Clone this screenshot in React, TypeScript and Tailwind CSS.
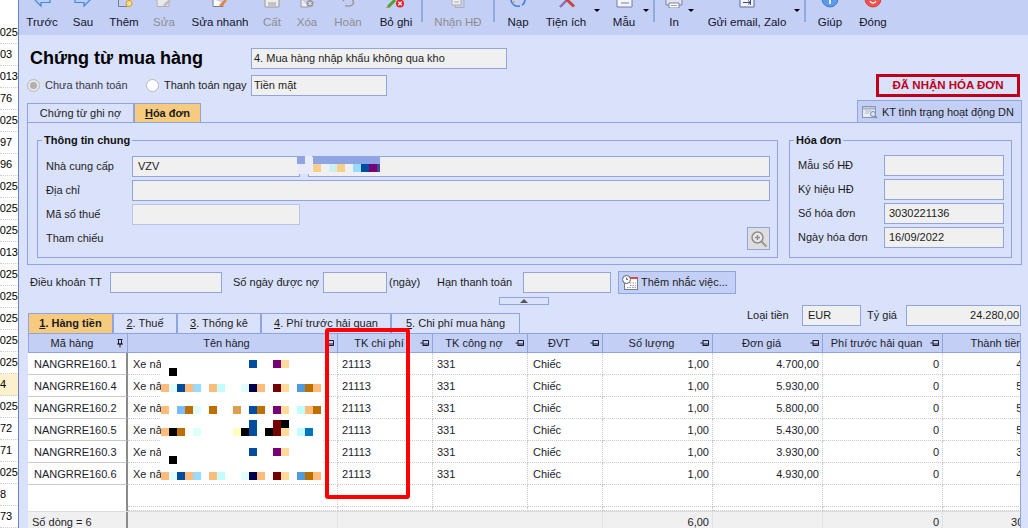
import React from "react";

const W = "#ffffff";
type Cell = [number, number, string];
const O = "#ffbc79", B = "#004c9e", BR = "#bd7000", LO = "#ffdb99", P = "#770077", DR = "#770000", K = "#000000", PC = "#dfffff", CY = "#bfffff";
const row2 = (y: number): Cell[] => [
  [161, y, O], [169, y, PC], [177, y, B], [185, y, O], [193, y, "#99dbff"], [209, y, O], [217, y, CY], [241, y, PC],
  [249, y, "#000050"], [257, y, O], [273, y, DR], [281, y, LO], [297, y, "#4d9de0"], [305, y, BR], [313, y, O],
];
const cells: Cell[] = [
  [169, 368, K], [249, 360, B], [273, 360, P], [281, 360, LO],
  ...row2(384),
  [161, 406, O], [177, 406, "#79bcff"], [185, 406, BR], [193, 406, PC], [209, 406, BR], [233, 406, "#de9f4d"], [249, 406, B], [257, 406, BR], [273, 406, P], [281, 406, LO], [297, 406, CY], [305, 406, O], [313, 406, BR],
  [249, 420, B], [273, 420, DR], [281, 420, K],
  [161, 428, O], [169, 428, K], [177, 428, BR], [193, 428, PC], [233, 428, "#ffffbf"], [241, 428, K], [249, 428, B], [265, 428, K], [273, 428, DR], [281, 428, LO], [297, 428, CY], [305, 428, "#0074bd"],
  [249, 448, B], [273, 448, P], [281, 448, LO], [169, 456, K],
  ...row2(472),
];

const Ico = ({ children }: { children: React.ReactNode }) => (
  <svg className="h-[8px] w-[24px] shrink-0" viewBox="0 0 24 8" fill="none">{children}</svg>
);
const G = "#9a9a9a";
const icons: Record<string, React.ReactNode> = {
  prev: <path d="M4 -1 L11 6 V2.5 H20 V-1" fill="#b5d0f7" stroke="#4a86d8" strokeWidth="1.2" />,
  next: <path d="M20 -1 L13 6 V2.5 H4 V-1" fill="#b5d0f7" stroke="#4a86d8" strokeWidth="1.2" />,
  add: <><path d="M6.5 -1 V6.5 H15" stroke="#7c7c8c" /><circle cx="17" cy="3.5" r="3" fill="#ffe08a" stroke="#d09a20" /></>,
  edit: <><path d="M5 -1 V6.5 H17 V-1" fill="#e8e8e8" stroke="#b0b0b0" /><path d="M12 6 L18 0" stroke="#bdbdbd" strokeWidth="2.5" /></>,
  quick: <><path d="M5 -1 V6.5 H15 V3" fill="#fff" stroke="#7c7c8c" /><path d="M12 6 L18 0" stroke="#e8843a" strokeWidth="2.5" /></>,
  save: <><path d="M5 -1 V7 H19 V-1" fill="#ececec" stroke={G} /><path d="M8 3 H16 M8 5 H16" stroke={G} /></>,
  del: <><path d="M6 -1 V7 H14" fill="#eee" stroke={G} /><circle cx="15" cy="3.5" r="3.5" fill={G} /><path d="M13.5 2 L16.5 5 M16.5 2 L13.5 5" stroke="#fff" /></>,
  undo: <><path d="M16 -1 C19 3 17 6 13 6 H9" stroke={G} strokeWidth="1.6" /><path d="M6 -1 L8 1" stroke={G} strokeWidth="1.4" /></>,
  skip: <><path d="M4 7 L11 0" stroke="#4fa32e" strokeWidth="3" /><path d="M4 7 L2.5 8" stroke="#c9822e" strokeWidth="1.5" /><circle cx="16" cy="3.5" r="4" fill="#e8202c" /><path d="M14.3 1.8 L17.7 5.2 M17.7 1.8 L14.3 5.2" stroke="#fff" strokeWidth="1.3" /></>,
  recv: <><path d="M6 -1 V5 H15 V-1" fill="#eee" stroke="#aeaeae" /><path d="M9 5 V7.5 H18 V-1" stroke="#aeaeae" /><path d="M8 2 H13" stroke="#aeaeae" /></>,
  reload: <><path d="M5 -1 C5 5 10 7 14 6" stroke="#3f7fdc" strokeWidth="1.6" /><path d="M19 -1 C19 2 18 4 16 5" stroke="#3f7fdc" strokeWidth="1.6" /><path d="M7 3 L9 1" stroke="#d09a20" /></>,
  tool: <><path d="M6 7 L13 0" stroke="#8a70b0" strokeWidth="2.4" /><path d="M12 -1 L20 6.5" stroke="#c8443c" strokeWidth="3" /></>,
  tpl: <><path d="M5 -1 V7 H20 V-1" fill="#f4f6ff" stroke="#6f7fa8" /><path d="M9 3 H17" stroke="#6f7fa8" /></>,
  print: <><path d="M4 -1 V5 H20 V-1" fill="#dfe4f0" stroke="#7a84a0" /><path d="M7 3 H17 V8 H7 Z" fill="#fff" stroke="#7a84a0" /><path d="M9 5.5 H15" stroke="#9aa2b8" /></>,
  mail: <><path d="M5 -1 V7 H19 V-1" fill="#f4f6ff" stroke="#5a6a98" /><path d="M8 2.5 H15 M13 0.5 L15.3 2.5 L13 4.5 M15.5 0 V5" stroke="#44507c" /></>,
  help: <><circle cx="12" cy="-1" r="8" fill="#5d9be8" stroke="#3f7fd0" /><path d="M12 0 V4" stroke="#fff" strokeWidth="1.6" /></>,
  close: <><circle cx="12" cy="-1" r="8" fill="#ef5350" stroke="#d8403c" /><path d="M9 1 A3.2 3.2 0 0 0 15 1" stroke="#fff" strokeWidth="1.2" /></>,
};

const Tool = ({ w, label, icon, off }: { w: string; label: string; icon: string; off?: boolean }) => (
  <div className={`${w} flex shrink-0 flex-col items-center`}>
    <Ico>{icons[icon]}</Ico>
    <span className={`mt-[7px] whitespace-nowrap text-[11.5px] leading-[14px] ${off ? "text-[#8e8e8e]" : "text-[#14142a]"}`}>{label}</span>
  </div>
);
const Sep = ({ c = "" }: { c?: string }) => <div className={`h-[22px] w-[2px] shrink-0 bg-[#8eabdc] ${c}`} />;
const Caret = ({ c }: { c: string }) => (
  <div className={`mt-[9px] flex shrink-0 justify-end ${c}`}>
    <div className="h-0 w-0 border-x-[3px] border-t-[3px] border-x-transparent border-t-black" />
  </div>
);

const Box = ({ c, children }: { c: string; children?: React.ReactNode }) => (
  <div className={`flex shrink-0 items-center overflow-hidden whitespace-nowrap border border-[#8fa5e3] bg-[#f0f0f0] text-[11px] text-[#1c1c1c] ${c}`}>{children}</div>
);

const strip: [string, boolean?][] = [
  ["0025"], ["03", true], ["0013"], ["76", true], ["0025"], ["97", true], ["96", true], ["0025"], ["0025"], ["0025"], ["0013"],
  ["0025"], ["0025"], ["0025"], ["0025"], ["0025"], ["4", true], ["0025"], ["72", true], ["71", true], ["0025"], ["8", true], ["73", true],
];

const cols = "grid grid-cols-[100px_210px_95px_95px_75px_110px_110px_120px_120px]";
const Pin = ({ v }: { v?: boolean }) => (
  <svg className="h-[10px] w-[10px] shrink-0" viewBox="0 0 10 10" fill="none" stroke="#1a1a2a">
    {v ? <path d="M2.5 1.5 H7.5 M3.5 1.5 V6 H6.5 V1.5 M2 6 H8 M5 6 V9.5" /> : <path d="M0.5 5 H3 M3 2 V8 M3 2.5 H8.5 V7.5 H3 M3 6 H8.5" />}
  </svg>
);
const heads = ["Mã hàng", "Tên hàng", "TK chi phí", "TK công nợ", "ĐVT", "Số lượng", "Đơn giá", "Phí trước hải quan", "Thành tiền"];
const data = [
  ["NANGRRE160.1", "4.700,00", "4.700,00", true],
  ["NANGRRE160.4", "5.930,00", "5.930,00", false],
  ["NANGRRE160.2", "5.800,00", "5.800,00", true],
  ["NANGRRE160.5", "5.430,00", "5.430,00", false],
  ["NANGRRE160.3", "3.930,00", "3.930,00", true],
  ["NANGRRE160.6", "4.930,00", "4.930,00", false],
] as [string, string, string, boolean][];

const Cell = ({ c = "", children }: { c?: string; children?: React.ReactNode }) => (
  <div className={`flex items-center overflow-hidden whitespace-nowrap border-b border-r border-dotted border-[#c9c9c9] pt-px ${c}`}>{children}</div>
);
const First = "border-r-2 border-r-[#8a8a8a] border-solid border-b-[#c9c9c9]";

const EmptyRow = ({ h }: { h: string }) => (
  <div className={`${cols} ${h}`}>
    <div className="border-r-2 border-[#8a8a8a]" />
    {[0, 1, 2, 3, 4, 5, 6, 7].map((i) => <Cell key={i} />)}
  </div>
);

const Tab = ({ c, on, k, t }: { c: string; on?: boolean; k: string; t: string }) => (
  <div className={`flex h-[20px] shrink-0 items-center justify-center whitespace-nowrap border border-b-0 border-[#8fa5e3] text-[11px] text-[#1c1c1c] ${on ? "bg-[#f7cb7f] font-bold" : ""} ${c}`}>
    <u>{k}</u>{t}
  </div>
);

export default function App() {
  return (
    <div className="relative flex h-[528px] w-[1028px] overflow-hidden bg-white font-['Liberation_Sans',sans-serif] text-[11px] text-black">
      <div className="flex w-[18px] shrink-0 flex-col overflow-hidden pt-[22px]">
        {strip.map(([t, short], i) => (
          <div key={i} className={`flex h-[22px] shrink-0 items-center overflow-hidden border-b border-dotted border-[#cfcfcf] text-[11px] ${short ? "justify-start" : "justify-end"} ${t === "4" ? "bg-[#fdf0cc]" : ""}`}>
            <span className="whitespace-nowrap">{t}</span>
          </div>
        ))}
      </div>
      <div className="flex w-[1010px] shrink-0 flex-col border-l border-[#6f83bd] bg-[#d9e1fb]">
        {/* toolbar */}
        <div className="flex h-[35px] shrink-0 items-start overflow-hidden bg-[#c3cff5] pl-[4px]">
          <Tool w="w-[38px]" label="Trước" icon="prev" />
          <Tool w="w-[44px]" label="Sau" icon="next" />
          <Tool w="w-[38px]" label="Thêm" icon="add" />
          <Tool w="w-[42px]" label="Sửa" icon="edit" off />
          <Tool w="w-[70px]" label="Sửa nhanh" icon="quick" />
          <Tool w="w-[34px]" label="Cất" icon="save" off />
          <Tool w="w-[36px]" label="Xóa" icon="del" off />
          <Tool w="w-[46px]" label="Hoàn" icon="undo" off />
          <Tool w="w-[50px]" label="Bỏ ghi" icon="skip" />
          <Sep />
          <Tool w="w-[70px]" label="Nhận HĐ" icon="recv" off />
          <Sep />
          <Tool w="w-[46px]" label="Nạp" icon="reload" />
          <Tool w="w-[50px]" label="Tiện ích" icon="tool" />
          <Caret c="w-[9px]" />
          <Tool w="w-[48px]" label="Mẫu" icon="tpl" />
          <Caret c="-ml-[5px] w-[6px]" />
          <Sep c="ml-[4px]" />
          <Tool w="w-[38px]" label="In" icon="print" />
          <Caret c="-ml-[5px] w-[6px]" />
          <Tool w="w-[106px]" label="Gửi email, Zalo" icon="mail" />
          <Caret c="-ml-[6px] w-[6px]" />
          <Sep c="ml-[4px]" />
          <Tool w="w-[48px]" label="Giúp" icon="help" />
          <Tool w="w-[38px]" label="Đóng" icon="close" />
        </div>

        <div className="flex flex-1 flex-col pl-[8px]">
          {/* title */}
          <div className="mt-[13px] flex h-[21px] shrink-0 items-center">
            <div className="w-[224px] shrink-0 pl-[3px] text-[18px] font-bold leading-[21px]">Chứng từ mua hàng</div>
            <Box c="h-[21px] w-[256px] px-[2px]">4. Mua hàng nhập khẩu không qua kho</Box>
          </div>
          {/* radio */}
          <div className="mt-[6px] flex h-[21px] w-[995px] shrink-0 items-center">
            <div className="flex h-[13px] w-[13px] shrink-0 items-center justify-center rounded-full border border-[#b9b9b9] bg-[#e6e6e6]">
              <div className="h-[7px] w-[7px] rounded-full bg-[#b0b0b0]" />
            </div>
            <span className="ml-[5px] w-[101px] shrink-0 text-[#3a3a4a]">Chưa thanh toán</span>
            <div className="h-[13px] w-[13px] shrink-0 rounded-full border border-[#b9b9b9] bg-white" />
            <span className="ml-[5px] w-[87px] shrink-0 whitespace-nowrap text-[#1c1c1c]">Thanh toán ngay</span>
            <Box c="h-[21px] w-[136px] px-[2px]">Tiền mặt</Box>
            <div className="ml-auto mr-[2px] flex h-[23px] w-[144px] shrink-0 items-center justify-center border-[3px] border-[#c00018] text-[11.5px] font-bold text-[#c00018]">ĐÃ NHẬN HÓA ĐƠN</div>
          </div>
          {/* tabs */}
          <div className="mt-[4px] flex h-[23px] w-[995px] shrink-0 items-end">
            <Tab c="w-[107px]" k="" t="Chứng từ ghi nợ" />
            <Tab c="w-[67px]" on k="H" t="óa đơn" />
            <div className="ml-auto flex h-[23px] w-[165px] items-center border border-b-0 border-[#8fa5e3] bg-[#c3cff5] pl-[4px] text-[11px] tracking-[-0.1px] text-[#1c1c1c]">
              <svg className="mr-[4px] h-[14px] w-[16px] shrink-0" viewBox="0 0 16 14" fill="none">
                <rect x="0.5" y="1.5" width="13" height="11" fill="#e8ecf8" stroke="#8c94ac" />
                <path d="M1 3.5 H13" stroke="#a8b0c8" strokeWidth="2" />
                <path d="M3 6 H9 M3 8 H7" stroke="#b0b8cc" />
                <circle cx="11" cy="9" r="2.5" fill="#dbe8f8" stroke="#7a8aa8" />
                <path d="M13 11 L15 13" stroke="#7a8aa8" strokeWidth="1.4" />
              </svg>
              KT tình trạng hoạt động DN
            </div>
          </div>
          {/* panel */}
          <div className="-mt-px flex h-[143px] w-[995px] shrink-0 gap-[11px] border border-[#8fa5e3] pl-[9px] pt-[17px]">
            <div className="h-[118px] w-[741px] shrink-0 border border-[#8fa5e3]">
              <div className="-mt-[8px] ml-[4px] h-[14px] w-fit bg-[#d9e1fb] px-[2px] font-bold leading-[14px] text-[#111]">Thông tin chung</div>
              <div className="mt-[9px] flex h-[21px] items-center pl-[8px]">
                <span className="w-[86px] shrink-0 text-[#1c1c1c]">Nhà cung cấp</span>
                <Box c="h-[21px] w-[168px] px-[5px]">VZV</Box>
                <Box c="ml-[8px] h-[21px] w-[462px]" />
              </div>
              <div className="mt-[3px] flex h-[21px] items-center pl-[8px]">
                <span className="w-[86px] shrink-0 text-[#1c1c1c]">Địa chỉ</span>
                <Box c="h-[21px] w-[638px]" />
              </div>
              <div className="mt-[3px] flex h-[21px] items-center pl-[8px]">
                <span className="w-[86px] shrink-0 text-[#1c1c1c]">Mã số thuế</span>
                <Box c="h-[21px] w-[168px] border-[#b9c4e6]" />
              </div>
              <div className="mt-[2px] flex h-[23px] items-center pl-[8px]">
                <span className="w-[86px] shrink-0 text-[#1c1c1c]">Tham chiếu</span>
                <div className="ml-auto mr-[7px] flex h-[23px] w-[23px] items-center justify-center border border-[#8fa5e3] bg-[#dedede]">
                  <svg className="h-[18px] w-[18px]" viewBox="0 0 18 18" fill="none">
                    <circle cx="7.5" cy="7.5" r="5.5" fill="#e8e8e8" stroke="#8f8f8f" strokeWidth="1.5" />
                    <path d="M7.5 5 V10 M5 7.5 H10" stroke="#8f8f8f" strokeWidth="1.5" />
                    <path d="M11.5 11.5 L16.5 16.5" stroke="#9a9a9a" strokeWidth="2" />
                  </svg>
                </div>
              </div>
            </div>
            <div className="h-[118px] w-[223px] shrink-0 border border-[#8fa5e3]">
              <div className="-mt-[8px] ml-[4px] h-[14px] w-fit bg-[#d9e1fb] px-[2px] font-bold leading-[14px] text-[#111]">Hóa đơn</div>
              <div className="mt-[8px] flex flex-col gap-[3px] pl-[8px]">
                {[["Mẫu số HĐ", ""], ["Ký hiệu HĐ", ""], ["Số hóa đơn", "3030221136"], ["Ngày hóa đơn", "16/09/2022"]].map(([l, v]) => (
                  <div key={l} className="flex h-[21px] items-center">
                    <span className="w-[86px] shrink-0 text-[#1c1c1c]">{l}</span>
                    <Box c="h-[21px] w-[120px] px-[4px]">{v}</Box>
                  </div>
                ))}
              </div>
            </div>
          </div>
          {/* payment */}
          <div className="mt-[6px] flex h-[23px] shrink-0 items-center pl-[3px] text-[#1c1c1c]">
            <span className="w-[80px] shrink-0">Điều khoản TT</span>
            <Box c="h-[21px] w-[112px]" />
            <span className="ml-[11px] w-[90px] shrink-0 whitespace-nowrap">Số ngày được nợ</span>
            <Box c="h-[21px] w-[64px]" />
            <span className="ml-[2px] w-[48px] shrink-0">(ngày)</span>
            <span className="w-[86px] shrink-0 whitespace-nowrap">Hạn thanh toán</span>
            <Box c="h-[21px] w-[88px]" />
            <div className="ml-[7px] flex h-[23px] w-[118px] shrink-0 items-center border border-[#8fa5e3] bg-[#c3cff5] pl-[3px]">
              <svg className="mr-[3px] h-[16px] w-[16px] shrink-0" viewBox="0 0 16 16" fill="none">
                <rect x="2.5" y="2.5" width="13" height="12" fill="#fff" stroke="#7a7a8a" />
                <path d="M7 3 H15.5" stroke="#d84a3a" strokeWidth="2" />
                <path d="M8 8 H14 M8 10.5 H14 M5 12.5 H14" stroke="#9a9aaa" strokeDasharray="1.5 1" />
                <circle cx="4.5" cy="4.5" r="4" fill="#fff" stroke="#55606e" />
                <path d="M4.5 2.5 V4.5 H6" stroke="#55606e" />
              </svg>
              Thêm nhắc việc...
            </div>
          </div>
          {/* splitter */}
          <div className="ml-[472px] mt-[3px] flex h-[8px] w-[50px] shrink-0 items-center justify-center self-start border border-[#8fa5e3]">
            <div className="h-0 w-0 border-x-[4px] border-b-[4px] border-x-transparent border-b-[#555]" />
          </div>
          {/* tabs + currency */}
          <div className="flex h-[28px] w-[994px] shrink-0">
            <div className="ml-px flex items-end self-end">
              <Tab c="w-[85px]" on k="1" t=". Hàng tiền" />
              <Tab c="w-[64px]" k="2" t=". Thuế" />
              <Tab c="w-[84px]" k="3" t=". Thống kê" />
              <Tab c="w-[130px]" k="4" t=". Phí trước hải quan" />
              <Tab c="w-[129px]" k="5" t=". Chi phí mua hàng" />
            </div>
            <div className="ml-auto flex h-[21px] items-center text-[#1c1c1c]">
              <span className="w-[55px] shrink-0">Loại tiền</span>
              <Box c="h-[21px] w-[59px] px-[5px]">EUR</Box>
              <span className="ml-[6px] w-[39px] shrink-0">Tỷ giá</span>
              <Box c="h-[21px] w-[115px] justify-end px-[1px]">24.280,00</Box>
            </div>
          </div>
          {/* table */}
          <div className="ml-px flex w-[993px] flex-1 flex-col overflow-hidden border-r border-[#8fa5e3] bg-white text-[#1c1c2c]">
            <div className={`${cols} h-[20px] shrink-0 border-y border-[#8fa5e3] bg-[#c3cff5]`}>
              {heads.map((h, i) => (
                <div key={h} className={`flex items-center overflow-hidden whitespace-nowrap border-r border-[#8fa5e3] pr-[2px] ${i === 0 ? "border-l" : ""}`}>
                  <span className="flex-1 text-center">{h}</span>
                  <Pin v={i === 0} />
                </div>
              ))}
            </div>
            {data.map(([code, price, total, colon]) => (
              <div key={code} className={`${cols} h-[22px] shrink-0`}>
                <Cell c={`${First} pl-[6px]`}>{code}</Cell>
                <Cell c="justify-between pl-[5px] pr-[13px]"><span>Xe nâ</span>{colon ? <span className="text-[#8aa]">:</span> : null}</Cell>
                <Cell c="pl-[4px]">21113</Cell>
                <Cell c="pl-[4px]">331</Cell>
                <Cell c="pl-[5px]">Chiếc</Cell>
                <Cell c="justify-end pr-[3px]">1,00</Cell>
                <Cell c="justify-end pr-[3px]">{price}</Cell>
                <Cell c="justify-end pr-[3px]">0</Cell>
                <Cell c="justify-end pr-[3px]">{total}</Cell>
              </div>
            ))}
            <EmptyRow h="h-[22px] shrink-0" />
            <EmptyRow h="h-[4px] shrink-0" />
            <div className={`${cols} h-[22px] shrink-0 border-t border-[#dcdcdc] bg-[#f0f0f0]`}>
              <div className="flex items-center border-r-2 border-[#8a8a8a] pl-[4px]">Số dòng = 6</div>
              <div className="border-r border-[#e2e2e2]" />
              <div />
              <div />
              <div className="border-r border-[#e2e2e2]" />
              <div className="flex items-center justify-end border-r border-[#e2e2e2] pr-[3px]">6,00</div>
              <div className="border-r border-[#e2e2e2]" />
              <div className="flex items-center justify-end border-r border-[#e2e2e2] pr-[3px]">0</div>
              <div className="flex items-center justify-end pr-[3px]">30.720,00</div>
            </div>
          </div>
        </div>
      </div>

      {/* redaction mosaics over the supplier name and the goods column */}
      <svg className="absolute left-[297px] top-[156px] h-[18px] w-[84px]" viewBox="297 156 84 18">
        <rect x="297" y="156" width="15" height="18" fill="#e8ecfa" />
        <rect x="297" y="156" width="8" height="8" fill="#8fa5e3" />
        <rect x="313" y="156" width="67" height="8" fill="#8fa5e3" />
        <rect x="313" y="164" width="67" height="8" fill="#f0f0f0" />
        {([[313, "#f5d08c"], [329, "#cfeef0"], [337, "#f5d08c"], [353, "#99dbff"], [361, B], [369, P]] as [number, string][]).map(([x, f]) => (
          <rect key={x} x={x} y="164" width="8" height="8" fill={f} />
        ))}
        <rect x="377" y="164" width="3" height="8" fill="#3f4a99" />
      </svg>
      <svg className="absolute left-[161px] top-[356px] h-[125px] w-[162px]" viewBox="161 356 162 125">
        <rect x="161" y="356" width="162" height="125" fill={W} />
        {cells.map(([x, y, f], i) => <rect key={i} x={x} y={y} width="8" height="8" fill={f} />)}
      </svg>
      <div className="absolute left-[325px] top-[328px] h-[171px] w-[85px] rounded-[3px] border-[4px] border-[#ff0000]" />
    </div>
  );
}
